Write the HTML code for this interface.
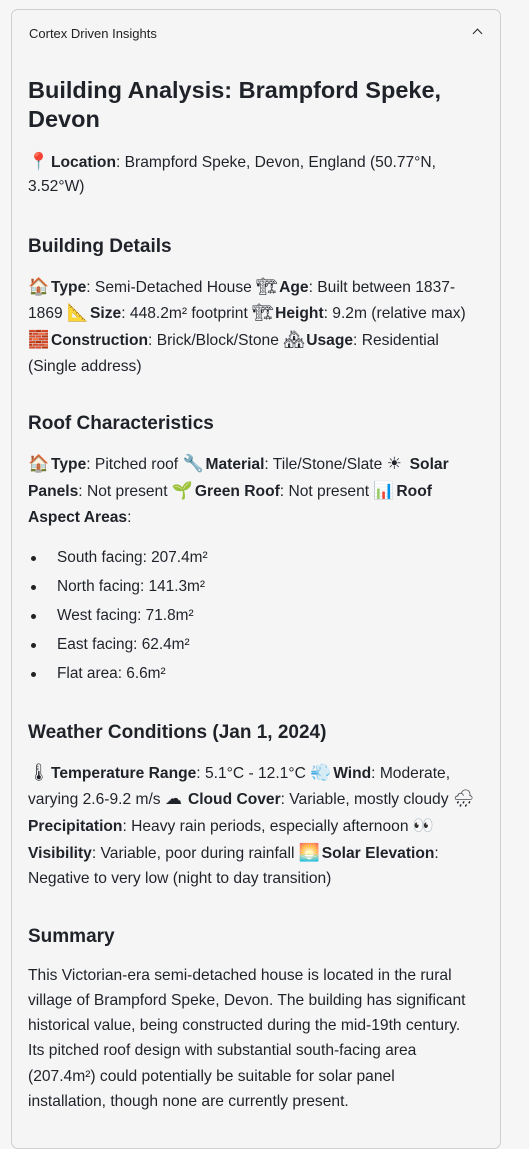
<!DOCTYPE html>
<html><head><meta charset="utf-8"><style>
*{margin:0;padding:0;box-sizing:border-box}
body{width:529px;height:1112px;background:#f6f6f6;font-family:"Liberation Sans",sans-serif;color:#1f2329;overflow:hidden;position:relative}
.card{position:absolute;left:11px;top:9px;width:490px;height:1140px;border:1px solid #cfcfcf;border-radius:7px;background:#f5f5f5}
.hd{position:absolute;left:17px;top:16px;font-size:13px;color:#222}
.chev{position:absolute;right:19px;top:20px;width:7px;height:7px;border-left:1.6px solid #222;border-top:1.6px solid #222;transform:rotate(45deg)}
.l{position:absolute;left:28px;white-space:nowrap;font-size:15.6px;line-height:20px}
.h1{font-size:23.5px;font-weight:bold;line-height:29px}
.h3{font-size:19px;font-weight:bold}
b{font-weight:bold}
.e{display:inline-block;width:23px;font-size:17px}
.li{left:57px;font-size:15.4px}
.dot{position:absolute;left:31px;width:5px;height:5px;border-radius:50%;background:#222}
</style></head><body>
<div class="card"><div class="hd">Cortex Driven Insights</div><div class="chev"></div></div>
<div class="l h1" style="top:76px">Building Analysis: Brampford Speke,</div>
<div class="l h1" style="top:105px">Devon</div>
<div class="l" style="top:152px"><span class="e">📍</span><b>Location</b>: Brampford Speke, Devon, England (50.77°N,</div>
<div class="l" style="top:177px">3.52°W)</div>
<div class="l h3" style="top:237px">Building Details</div>
<div class="l" style="top:277px"><span class="e">🏠</span><b>Type</b>: Semi-Detached House <span class="e">🏗</span><b>Age</b>: Built between 1837-</div>
<div class="l" style="top:303px">1869 <span class="e">📐</span><b>Size</b>: 448.2m² footprint <span class="e">🏗</span><b>Height</b>: 9.2m (relative max)</div>
<div class="l" style="top:330px"><span class="e">🧱</span><b>Construction</b>: Brick/Block/Stone <span class="e">🏘</span><b>Usage</b>: Residential</div>
<div class="l" style="top:357px">(Single address)</div>
<div class="l h3" style="top:414px">Roof Characteristics</div>
<div class="l" style="top:454px"><span class="e">🏠</span><b>Type</b>: Pitched roof <span class="e">🔧</span><b>Material</b>: Tile/Stone/Slate <span class="e">☀</span><b>Solar</b></div>
<div class="l" style="top:481px"><b>Panels</b>: Not present <span class="e">🌱</span><b>Green Roof</b>: Not present <span class="e">📊</span><b>Roof</b></div>
<div class="l" style="top:508px"><b>Aspect Areas</b>:</div>
<div class="dot" style="top:556px"></div><div class="l li" style="top:548px">South facing: 207.4m²</div>
<div class="dot" style="top:585px"></div><div class="l li" style="top:577px">North facing: 141.3m²</div>
<div class="dot" style="top:614px"></div><div class="l li" style="top:606px">West facing: 71.8m²</div>
<div class="dot" style="top:643px"></div><div class="l li" style="top:635px">East facing: 62.4m²</div>
<div class="dot" style="top:672px"></div><div class="l li" style="top:664px">Flat area: 6.6m²</div>
<div class="l h3" style="top:723px">Weather Conditions (Jan 1, 2024)</div>
<div class="l" style="top:763px"><span class="e">🌡</span><b>Temperature Range</b>: 5.1°C - 12.1°C <span class="e">💨</span><b>Wind</b>: Moderate,</div>
<div class="l" style="top:789px">varying 2.6-9.2 m/s <span class="e">☁</span><b>Cloud Cover</b>: Variable, mostly cloudy <span class="e">🌧</span></div>
<div class="l" style="top:816px"><b>Precipitation</b>: Heavy rain periods, especially afternoon <span class="e">👀</span></div>
<div class="l" style="top:843px"><b>Visibility</b>: Variable, poor during rainfall <span class="e">🌅</span><b>Solar Elevation</b>:</div>
<div class="l" style="top:869px">Negative to very low (night to day transition)</div>
<div class="l h3" style="top:927px">Summary</div>
<div class="l" style="top:966px">This Victorian-era semi-detached house is located in the rural</div>
<div class="l" style="top:991px">village of Brampford Speke, Devon. The building has significant</div>
<div class="l" style="top:1016px">historical value, being constructed during the mid-19th century.</div>
<div class="l" style="top:1041px">Its pitched roof design with substantial south-facing area</div>
<div class="l" style="top:1067px">(207.4m²) could potentially be suitable for solar panel</div>
<div class="l" style="top:1092px">installation, though none are currently present.</div>
</body></html>
